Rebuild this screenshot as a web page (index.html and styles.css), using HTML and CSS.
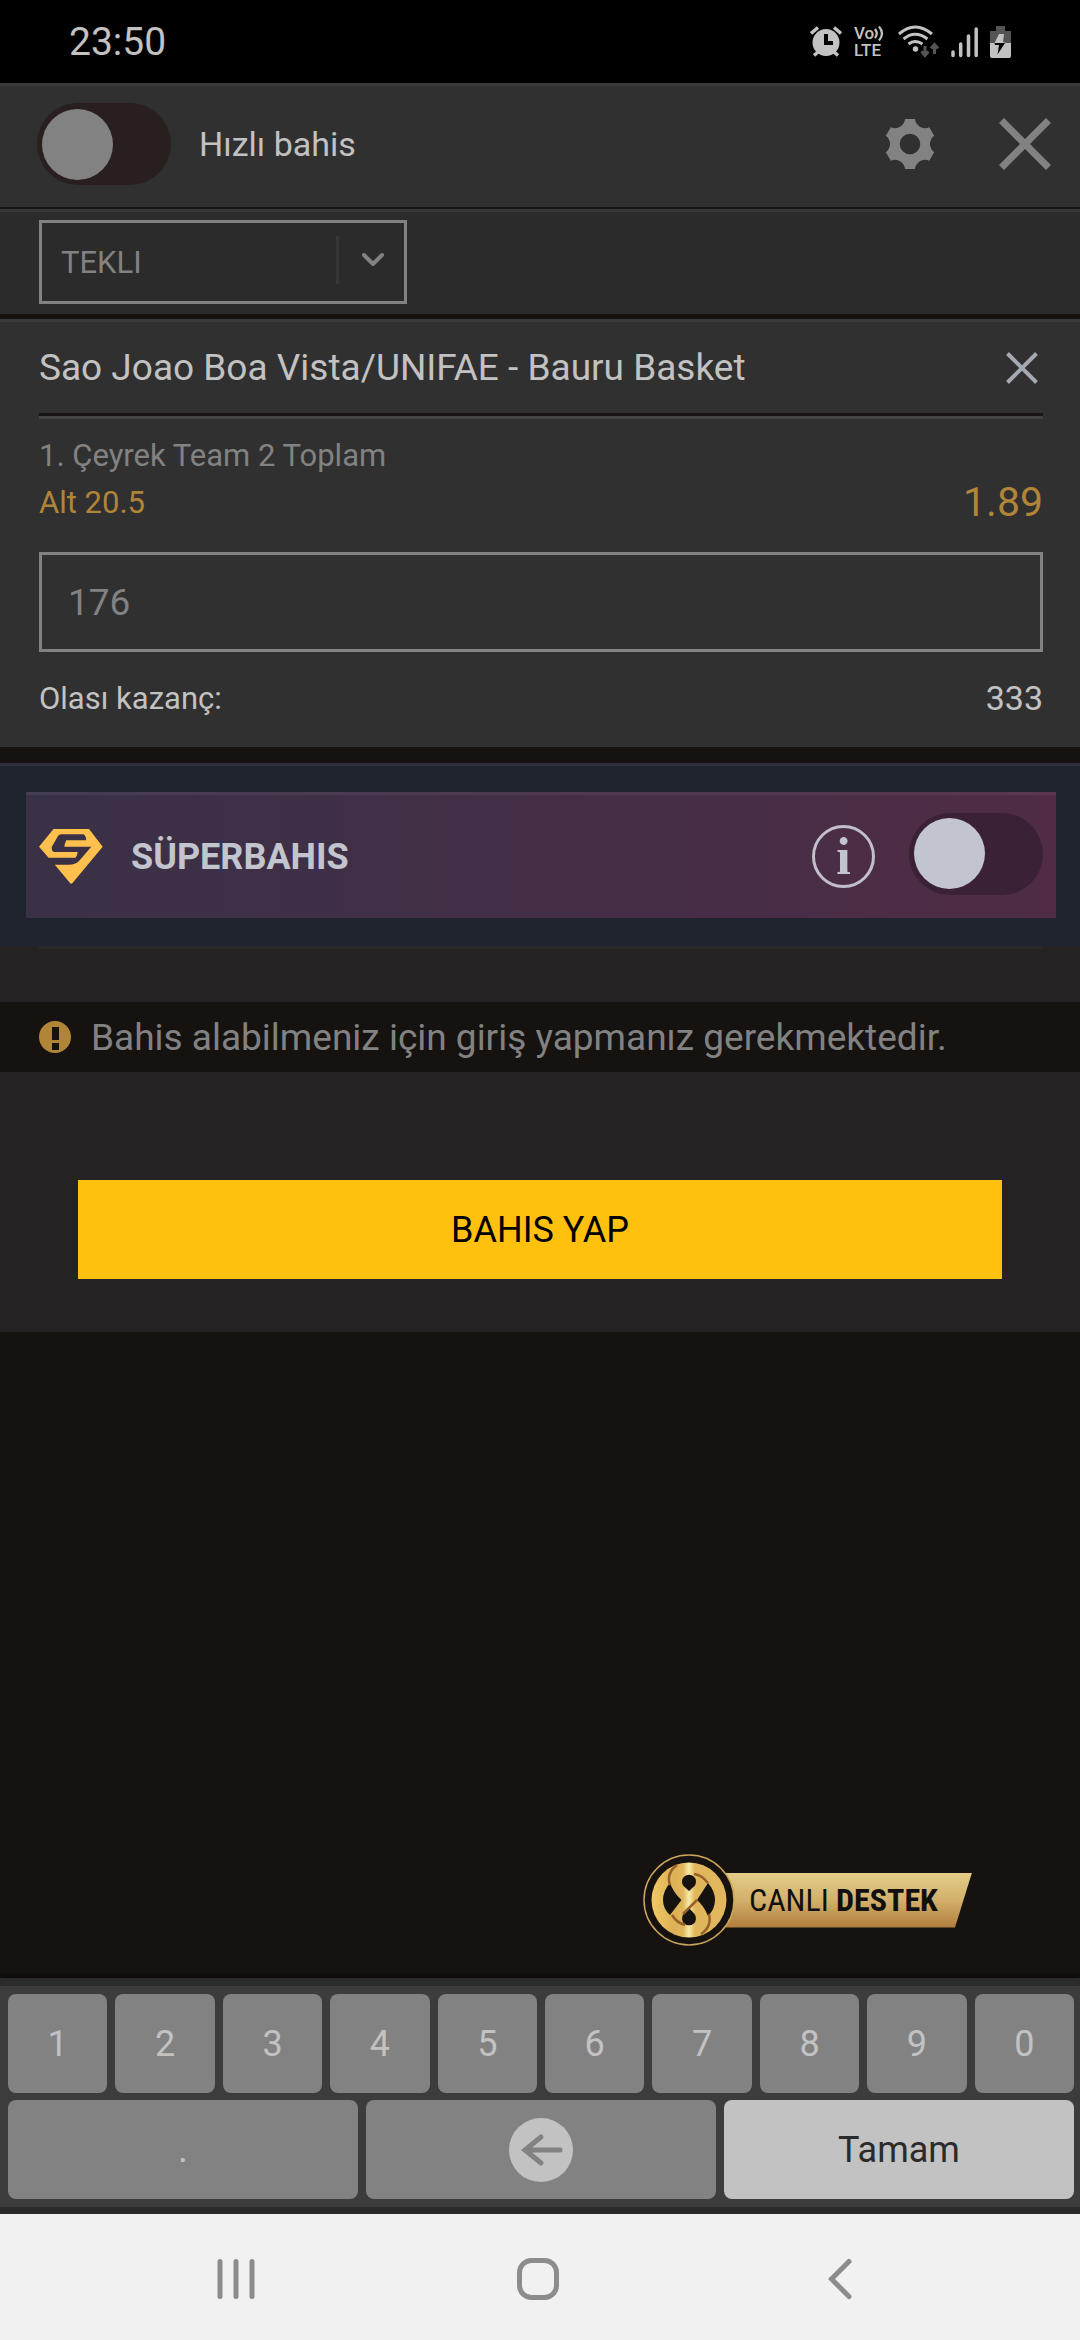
FILE: index.html
```html
<!DOCTYPE html>
<html lang="tr">
<head>
    <meta charset="UTF-8">
    <meta name="viewport" content="width=device-width, initial-scale=1.0">
    <title>Bahis Kuponu</title>
    <link rel="stylesheet" href="styles.css">
</head>
<body>
    <div class="status-bar">
        <span class="time">23:50</span>
        <div class="status-icons">
            <svg width="32" height="32" viewBox="0 0 32 32">
                <circle cx="16" cy="16.500" r="13.500" fill="#c2c2c2"/>
                <path d="M1 7.500L8 1.500M31 7.500L24 1.500M4 29.500L9 25M28 29.500L23 25" stroke="#c2c2c2" stroke-width="3.500"/>
                <path d="M16 8V17H23" stroke="#000" stroke-width="4" fill="none"/>
            </svg>
            <div class="volte">
                <div class="volte-top">
                    <span>Vo</span>
                    <svg width="11" height="17" viewBox="0 0 11 17" fill="none" stroke="#c2c2c2" stroke-width="2.200">
                        <path d="M1 4Q4.500 8.500 1 13M5 1.500Q11 8.500 5 15.500"/>
                    </svg>
                </div>
                <span>LTE</span>
            </div>
            <svg width="41" height="33" viewBox="0 0 41 33" fill="none">
                <g stroke="#c2c2c2" stroke-width="3">
                    <path d="M1 9Q17 -5 34 9M5.500 14Q17 4.500 29.500 14M10.500 19Q17 14 24.500 19"/>
                </g>
                <circle cx="17.500" cy="24" r="2.700" fill="#c2c2c2"/>
                <path d="M27 21V30M23.500 26.500L27 30.500L30.500 26.500M36.500 29V20M33 23.500L36.500 19.500L40 23.500" stroke="#545454" stroke-width="3"/>
            </svg>
            <svg width="27" height="32" viewBox="0 0 27 32" stroke="#c2c2c2" stroke-width="3.500" stroke-linecap="round">
                <path d="M2 26V29.500M9.700 18V29.500M17.500 10V29.500M25.200 3V29.500"/>
            </svg>
            <svg width="21" height="34" viewBox="0 0 21 34">
                <path d="M6 1H15V6H21V18H0V6H6Z" fill="#545454"/>
                <path d="M0 18H21V31Q21 33 19 33H2Q0 33 0 31Z" fill="#c2c2c2"/>
                <path d="M9 9L4.500 18H16L13 17L14 9Z" fill="#c2c2c2"/>
                <path d="M4.500 18H15L7.500 29.500L9 20H5Z" fill="#000"/>
            </svg>
        </div>
    </div>

    <main class="coupon">
        <header class="coupon-header">
            <input type="checkbox" class="switch" id="quick-bet">
            <label for="quick-bet" class="quick-label">Hızlı bahis</label>
            <button class="icon-button settings" aria-label="Ayarlar">
                <svg width="50" height="50" viewBox="0 0 50 50" fill="#828282">
                    <path fill-rule="evenodd" d="M20 0H30A10 10 0 0 0 44.200 8.200L49.200 16.800A10 10 0 0 0 49.200 33.200L44.200 41.800A10 10 0 0 0 30 50H20A10 10 0 0 0 5.800 41.800L.8 33.200A10 10 0 0 0 .8 16.800L5.800 8.200A10 10 0 0 0 20 0ZM25 14.700A10.300 10.300 0 1 0 25 35.300A10.300 10.300 0 1 0 25 14.700Z"/>
                </svg>
            </button>
            <button class="icon-button" aria-label="Kapat">
                <svg width="52" height="52" viewBox="0 0 52 52" stroke="#828282" stroke-width="7">
                    <path d="M2.500 2.500L49.500 49.500M49.500 2.500L2.500 49.500"/>
                </svg>
            </button>
        </header>

        <div class="bet-type">
            <div class="select-wrap">
                <select aria-label="Bahis tipi">
                    <option>TEKLI</option>
                </select>
                <span class="select-arrow">
                    <svg width="24" height="16" viewBox="0 0 24 16" fill="none" stroke="#828282" stroke-width="4" stroke-linecap="round" stroke-linejoin="round">
                        <path d="M3 3L12 12L21 3"/>
                    </svg>
                </span>
            </div>
        </div>

        <section class="bet">
            <div class="bet-title">
                <span>Sao Joao Boa Vista/UNIFAE - Bauru Basket</span>
                <button class="icon-button" aria-label="Bahsi sil">
                    <svg width="32" height="32" viewBox="0 0 32 32" stroke="#a4a8b0" stroke-width="4">
                        <path d="M1.500 1.500L30.500 30.500M30.500 1.500L1.500 30.500"/>
                    </svg>
                </button>
            </div>
            <div class="bet-info">
                <div>
                    <div class="market">1. Çeyrek Team 2 Toplam</div>
                    <div class="pick">Alt 20.5</div>
                </div>
                <div class="odds">1.89</div>
            </div>
            <input type="text" class="stake" value="176" aria-label="Miktar">
            <div class="winnings">
                <span>Olası kazanç:</span>
                <span class="amount">333</span>
            </div>
        </section>

        <section class="super">
            <div class="super-panel">
                <svg class="super-logo" width="64" height="56" viewBox="0 0 64 56" fill="#ffc04d">
                    <path d="M14.500 0H50L63.700 17.700L33.500 54Q32.300 55.500 31 54L15.800 35.700H29Q36 36 40 32L52.300 17.700H25.500Q25 17 27.200 11.300H47.200Q47 7 44.800 5.300H22Q20 5.300 19 7L12.700 18Q12.500 23 15.500 23H38.600Q38.500 27 36.500 28.700H9.600L0 17.700Z"/>
                </svg>
                <label for="super-bet" class="super-label">SÜPERBAHIS</label>
                <button class="info" aria-label="Bilgi">i</button>
                <input type="checkbox" class="switch switch-super" id="super-bet">
            </div>
        </section>

        <section class="summary">
            <div class="separator"></div>
            <div class="warning">
                <svg width="32" height="32" viewBox="0 0 32 32">
                    <circle cx="16" cy="16" r="16" fill="#b08538"/>
                    <path d="M13 6H20V19H13ZM13 22H20V29H13Z" fill="#161210"/>
                </svg>
                <span>Bahis alabilmeniz için giriş yapmanız gerekmektedir.</span>
            </div>
            <button class="place-bet">BAHIS YAP</button>
        </section>

        <a href="#" class="support">
            <svg class="support-logo" width="92" height="92" viewBox="0 0 92 92">
                <defs>
                    <linearGradient id="gold" x1="0" y1="0" x2="1" y2="0">
                        <stop offset="0" stop-color="#f0c963"/>
                        <stop offset="0.300" stop-color="#deb056"/>
                        <stop offset="0.420" stop-color="#e0b65c"/>
                        <stop offset="0.500" stop-color="#f7eba6"/>
                        <stop offset="0.580" stop-color="#e0b65c"/>
                        <stop offset="1" stop-color="#e2b75d"/>
                    </linearGradient>
                </defs>
                <circle cx="46" cy="46" r="45" fill="#161210" stroke="#c9a55a" stroke-width="1.500"/>
                <circle cx="46" cy="46" r="37.500" fill="url(#gold)"/>
                <g fill="#161210">
                    <path d="M27 29Q20 37 20 46Q20 55 27 61L38.500 46Q30 38 27 29Z"/>
                    <path d="M65 29Q72 37 72 46Q72 55 65 62Q61 52 54 46Z"/>
                    <path d="M46 37L40.500 32A7 7 0 1 1 51.500 32Z"/>
                    <path d="M46 54L51.500 60A7 7 0 1 1 40.500 60Z"/>
                </g>
                <g fill="none" stroke="#96602a" stroke-width="2.500">
                    <path d="M34 11Q23 19 27 31M58 80Q69 73 66 60"/>
                    <path d="M51 20Q59 21 65 29M29 61Q34 69 42 71M40 60L54 46"/>
                </g>
            </svg>
            <span class="support-text">CANLI <b>DESTEK</b></span>
        </a>
    </main>

    <div class="keyboard">
        <div class="key-row">
            <button>1</button>
            <button>2</button>
            <button>3</button>
            <button>4</button>
            <button>5</button>
            <button>6</button>
            <button>7</button>
            <button>8</button>
            <button>9</button>
            <button>0</button>
        </div>
        <div class="key-row">
            <button>.</button>
            <button aria-label="Sil">
                <svg width="64" height="64" viewBox="0 0 64 64" fill="none">
                    <circle cx="32" cy="32" r="32" fill="#c2c2c2"/>
                    <path d="M51 32H16M32 19L16 32L32 45" stroke="#828282" stroke-width="5" stroke-linecap="round"/>
                </svg>
            </button>
            <button class="done">Tamam</button>
        </div>
    </div>

    <nav class="system-nav">
        <button class="icon-button" aria-label="Son uygulamalar">
            <svg width="42" height="42" viewBox="0 0 42 42" stroke="#8c8c8c" stroke-width="5" stroke-linecap="round">
                <path d="M5 3.500V38.500M21 3.500V38.500M37 3.500V38.500"/>
            </svg>
        </button>
        <button class="icon-button" aria-label="Ana ekran">
            <svg width="42" height="42" viewBox="0 0 42 42" fill="none" stroke="#8c8c8c" stroke-width="5">
                <rect x="2.500" y="2.500" width="37" height="37" rx="12"/>
            </svg>
        </button>
        <button class="icon-button" aria-label="Geri">
            <svg width="24" height="42" viewBox="0 0 24 42" fill="none" stroke="#8c8c8c" stroke-width="5" stroke-linecap="round">
                <path d="M21 3.500L3.500 21L21 38.500"/>
            </svg>
        </button>
    </nav>
</body>
</html>
```
FILE: styles.css
```css
:root {
    --page-bg: #161210;
    --panel-bg: #303030;
    --bar-bg: #2b2b2b;
    --summary-bg: #242223;
    --muted: #828282;
    --text: #c2c2c2;
    --gold: #b08538;
}

* {
    box-sizing: border-box;
}

body {
    margin: 0;
    min-height: 100vh;
    display: flex;
    flex-direction: column;
    background-color: var(--page-bg);
    color: var(--text);
    font-family: Roboto, "Liberation Sans", sans-serif;
    font-size: 36px;
}

button,
input,
select {
    font-family: inherit;
    font-size: inherit;
    margin: 0;
}

svg {
    display: block;
    flex-shrink: 0;
}

.icon-button {
    display: flex;
    padding: 0;
    border: none;
    background: none;
    cursor: pointer;
}

/* phone status bar */
.status-bar {
    display: flex;
    justify-content: space-between;
    align-items: center;
    height: 83px;
    padding: 0 69px;
    background-color: #000000;
}

.time {
    font-size: 39px;
}

.status-icons {
    display: flex;
    align-items: center;
    gap: 12px;
}

.volte {
    width: 32px;
    font-size: 17px;
    font-weight: 500;
    line-height: 17px;
}

.volte-top {
    display: flex;
}

/* coupon */
.coupon {
    flex: 1;
    position: relative;
}

.coupon-header {
    display: flex;
    align-items: center;
    height: 126px;
    padding: 0 29px 5px 37px;
    border-top: 3px solid #3a3a3a;
    border-bottom: 2px solid #141414;
    background-color: var(--panel-bg);
}

.quick-label {
    margin-left: 28px;
    font-size: 34px;
}

.settings {
    margin: 0 64px 0 auto;
}

.switch {
    appearance: none;
    flex-shrink: 0;
    display: flex;
    align-items: center;
    width: 134px;
    height: 82px;
    padding: 0 5px;
    border-radius: 41px;
    background-color: #281f1e;
    cursor: pointer;
}

.switch::before {
    content: "";
    width: 71px;
    height: 71px;
    border-radius: 50%;
    background-color: var(--muted);
}

.switch:checked {
    justify-content: flex-end;
}

.switch-super {
    margin-bottom: 6px;
    background-color: #3a2135;
}

.switch-super::before {
    background-color: #c2c4ce;
}

.bet-type {
    padding: 8px 39px 10px;
    border-top: 3px solid #373737;
    background-color: var(--bar-bg);
}

.select-wrap {
    position: relative;
    width: 368px;
}

.select-wrap select {
    appearance: none;
    display: block;
    width: 100%;
    height: 84px;
    padding: 0 19px;
    border: 3px solid var(--muted);
    border-radius: 0;
    background: none;
    color: var(--muted);
    font-size: 31px;
}

.select-arrow {
    position: absolute;
    top: 16px;
    right: 0;
    display: flex;
    align-items: center;
    justify-content: center;
    width: 71px;
    height: 48px;
    border-left: 3px solid #363636;
    pointer-events: none;
}

.bet {
    margin-top: 5px;
    padding: 0 37px 3px 39px;
    border-top: 3px solid #3b3b3b;
    background-color: var(--panel-bg);
}

.bet-title {
    display: flex;
    align-items: center;
    justify-content: space-between;
    height: 94px;
    padding-right: 5px;
    border-bottom: 3px solid #1a1514;
    font-size: 37px;
}

.bet-info {
    display: flex;
    align-items: flex-end;
    justify-content: space-between;
    padding-top: 13px;
    border-top: 3px solid #434343;
    line-height: 47px;
}

.market,
.pick {
    font-size: 31px;
}

.market {
    color: var(--muted);
}

.pick,
.odds {
    color: var(--gold);
}

.odds {
    font-size: 41px;
}

.stake {
    display: block;
    width: 100%;
    height: 100px;
    margin-top: 26px;
    padding: 0 26px;
    border: 3px solid var(--muted);
    border-radius: 0;
    background: none;
    color: var(--muted);
    font-size: 37px;
}

.winnings {
    display: flex;
    align-items: center;
    justify-content: space-between;
    height: 92px;
    font-size: 31px;
}

.amount {
    font-size: 34px;
}

/* superbahis */
.super {
    margin-top: 16px;
    padding: 26px 24px 28px 26px;
    border-top: 3px solid #30303c;
    background-color: #20242e;
}

.super-panel {
    display: flex;
    align-items: center;
    height: 126px;
    padding: 0 13px;
    border-top: 3px solid rgba(255, 255, 255, 0.06);
    background: linear-gradient(to right, #3a3146, #432e46 50%, #502c46) border-box;
}

.super-label {
    margin-left: 28px;
    color: #c2c4ce;
    font-weight: bold;
}

.info {
    width: 63px;
    height: 63px;
    margin: 0 34px 0 auto;
    padding: 0;
    border: 3px solid #c2bfcc;
    border-radius: 50%;
    background: none;
    color: #c2c4ce;
    font-family: "Liberation Serif", serif;
    font-size: 52px;
    font-weight: bold;
    line-height: 52px;
}

/* summary */
.summary {
    padding-bottom: 53px;
    background-color: var(--summary-bg);
}

.separator {
    height: 3px;
    margin: 0 37px 53px 39px;
    background-color: #2b2a2a;
}

.warning {
    display: flex;
    align-items: center;
    gap: 20px;
    height: 70px;
    padding: 0 39px;
    background-color: var(--page-bg);
    color: var(--muted);
    font-size: 37px;
    white-space: nowrap;
}

.place-bet {
    display: block;
    width: calc(100% - 156px);
    height: 99px;
    margin: 108px auto 0;
    border: none;
    background-color: #ffc10d;
    color: #000000;
    cursor: pointer;
}

.support {
    position: absolute;
    right: 108px;
    bottom: 32px;
    display: flex;
    align-items: center;
    color: #10100f;
    text-decoration: none;
}

.support-logo {
    position: relative;
    z-index: 1;
}

.support-text {
    width: 246px;
    height: 55px;
    margin-left: -9px;
    padding-left: 23px;
    background: linear-gradient(#e4cd88, #d3b06a 50%, #b07c3c);
    clip-path: polygon(0 0, 100% 0, calc(100% - 17px) 100%, 0 100%);
    font-family: "Roboto Condensed", "Liberation Sans Narrow", "Liberation Sans", sans-serif;
    font-size: 32px;
    line-height: 55px;
    white-space: nowrap;
}

/* number keyboard */
.keyboard {
    display: flex;
    flex-direction: column;
    gap: 7px;
    padding: 8px 6px 8px 8px;
    border-top: 8px solid #2b2b2b;
    border-bottom: 7px solid #2b2b2b;
    background-color: #3c3c3c;
    box-shadow: 0 0 8px #000000;
}

.key-row {
    display: flex;
    gap: 8px;
}

.key-row button {
    flex: 1 1 0;
    display: flex;
    align-items: center;
    justify-content: center;
    height: 99px;
    padding: 0;
    border: none;
    border-radius: 8px;
    background-color: var(--muted);
    color: var(--text);
}

.key-row .done {
    background-color: var(--text);
    color: #2b2b2b;
}

.system-nav {
    position: relative;
    display: flex;
    height: 126px;
    padding: 4px 89px 0 85px;
    background-color: #f1f1f1;
}

.system-nav button {
    flex: 1;
    align-items: center;
    justify-content: center;
}
```
